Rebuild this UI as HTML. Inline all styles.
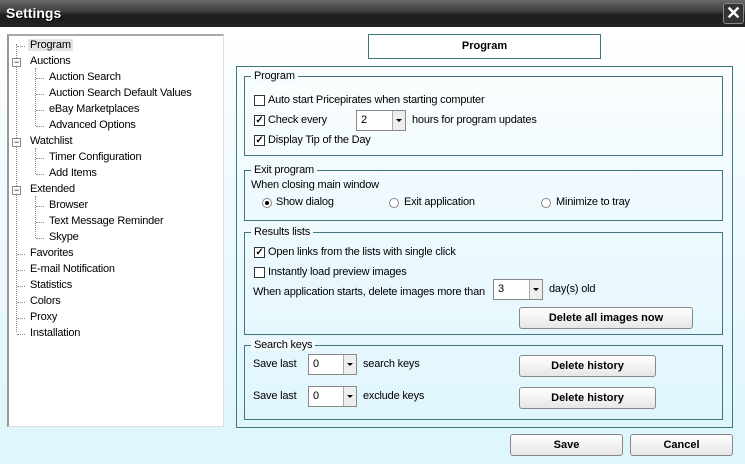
<!DOCTYPE html><html><head><style>
body{margin:0;width:745px;height:464px;overflow:hidden;font-family:"Liberation Sans",sans-serif;font-size:11px;letter-spacing:-0.2px;color:#000;background:linear-gradient(#fff 30px,#f3fbfe 150px,#e0f6fd 420px);position:relative}
.a{position:absolute}
.title{left:0;top:0;width:745px;height:27px;background:linear-gradient(#6a6a6a,#3a3a3a 45%,#1e1e1e 55%,#222);}
.title span{position:absolute;left:6px;top:5px;color:#fff;font-weight:bold;font-size:14px;letter-spacing:0;text-shadow:1px 1px 0 #000}
.x{left:723px;top:3px;width:19px;height:19px;border:1px solid #888;border-radius:3px;background:#333;color:#fff;font-size:18px;line-height:18px;text-align:center;font-weight:bold}
.tree{left:7px;top:34px;width:214px;height:390px;background:#fff;border:1px solid #ddd;border-left:2px solid #999;border-top:2px solid #aaa}
.tree .in{position:absolute;left:0;top:2px;width:100%}
.t{position:absolute;white-space:nowrap}
.dl{position:absolute;border-left:1px dotted #888}
.dh{position:absolute;border-top:1px dotted #888;width:8px}
.pm{position:absolute;width:7px;height:7px;border:1px solid #888;background:#fff;font-size:9px;line-height:6px;text-align:center}
.box{border:1px solid #3f7680}
.grp{position:absolute;left:244px;width:477px;border:1px solid #3f7680}
.lg{position:absolute;top:-7px;left:6px;background:#f3fbfe;padding:0 3px}
.cb{position:absolute;width:9px;height:9px;border:1px solid #333;background:#fff;font-size:10px;line-height:9px;text-align:center;font-weight:bold}
.rb{position:absolute;width:8px;height:8px;border:1px solid #888;border-radius:50%;background:#fff}
.dd{position:absolute;height:19px;border:1px solid #888;background:#fff}
.dd i{position:absolute;right:0;top:0;width:12px;height:19px;border-left:1px solid #aaa;background:#eee}
.dd i:after{content:"";position:absolute;left:3px;top:8px;border:3px solid transparent;border-top:3px solid #000}
.dd b{position:absolute;left:4px;top:3px;font-weight:normal}
.btn{position:absolute;height:20px;border:1px solid #888;border-radius:3px;background:linear-gradient(#fff,#e6e6e6);text-align:center;font-weight:bold;font-size:11px;line-height:20px;letter-spacing:0}
</style></head><body>
<div class="a title"><span>Settings</span></div>
<div class="a x">✕</div>
<div class="a tree"><div class="in">
<div class="dl" style="left:7px;top:6px;height:288px"></div>
<div class="dl" style="left:26px;top:30px;height:58px"></div>
<div class="dl" style="left:26px;top:110px;height:26px"></div>
<div class="dl" style="left:26px;top:158px;height:42px"></div>
<div class="dh" style="left:8px;top:8px"></div><div class="t" style="left:19px;top:1px;background:#e4e4e4;padding:0 2px">Program</div>
<div class="pm" style="left:3px;top:20px">−</div><div class="t" style="left:21px;top:17px">Auctions</div>
<div class="dh" style="left:27px;top:40px"></div><div class="t" style="left:40px;top:33px">Auction Search</div>
<div class="dh" style="left:27px;top:56px"></div><div class="t" style="left:40px;top:49px">Auction Search Default Values</div>
<div class="dh" style="left:27px;top:72px"></div><div class="t" style="left:40px;top:65px">eBay Marketplaces</div>
<div class="dh" style="left:27px;top:88px"></div><div class="t" style="left:40px;top:81px">Advanced Options</div>
<div class="pm" style="left:3px;top:100px">−</div><div class="t" style="left:21px;top:97px">Watchlist</div>
<div class="dh" style="left:27px;top:120px"></div><div class="t" style="left:40px;top:113px">Timer Configuration</div>
<div class="dh" style="left:27px;top:136px"></div><div class="t" style="left:40px;top:129px">Add Items</div>
<div class="pm" style="left:3px;top:148px">−</div><div class="t" style="left:21px;top:145px">Extended</div>
<div class="dh" style="left:27px;top:168px"></div><div class="t" style="left:40px;top:161px">Browser</div>
<div class="dh" style="left:27px;top:184px"></div><div class="t" style="left:40px;top:177px">Text Message Reminder</div>
<div class="dh" style="left:27px;top:200px"></div><div class="t" style="left:40px;top:193px">Skype</div>
<div class="dh" style="left:8px;top:216px"></div><div class="t" style="left:21px;top:209px">Favorites</div>
<div class="dh" style="left:8px;top:232px"></div><div class="t" style="left:21px;top:225px">E-mail Notification</div>
<div class="dh" style="left:8px;top:248px"></div><div class="t" style="left:21px;top:241px">Statistics</div>
<div class="dh" style="left:8px;top:264px"></div><div class="t" style="left:21px;top:257px">Colors</div>
<div class="dh" style="left:8px;top:280px"></div><div class="t" style="left:21px;top:273px">Proxy</div>
<div class="dh" style="left:8px;top:296px"></div><div class="t" style="left:21px;top:289px">Installation</div>
</div></div>
<div class="a box" style="left:368px;top:34px;width:231px;height:23px;background:#fff;text-align:center;line-height:23px;font-weight:bold;letter-spacing:0">Program</div>
<div class="a box" style="left:236px;top:66px;width:495px;height:360px"></div>

<div class="grp" style="top:76px;height:78px"><span class="lg">Program</span></div>
<div class="cb" style="left:254px;top:95px"></div><div class="a" style="left:268px;top:94px">Auto start Pricepirates when starting computer</div>
<div class="cb" style="left:254px;top:115px">✓</div><div class="a" style="left:268px;top:114px">Check every</div>
<div class="dd" style="left:356px;top:110px;width:48px"><b>2</b><i></i></div><div class="a" style="left:412px;top:114px">hours for program updates</div>
<div class="cb" style="left:254px;top:135px">✓</div><div class="a" style="left:268px;top:134px">Display Tip of the Day</div>

<div class="grp" style="top:170px;height:49px"><span class="lg">Exit program</span></div>
<div class="a" style="left:251px;top:179px">When closing main window</div>
<div class="rb" style="left:262px;top:198px"><div style="position:absolute;left:2px;top:2px;width:4px;height:4px;border-radius:50%;background:#000"></div></div><div class="a" style="left:276px;top:196px">Show dialog</div>
<div class="rb" style="left:389px;top:198px"></div><div class="a" style="left:404px;top:196px">Exit application</div>
<div class="rb" style="left:541px;top:198px"></div><div class="a" style="left:556px;top:196px">Minimize to tray</div>

<div class="grp" style="top:232px;height:101px"><span class="lg">Results lists</span></div>
<div class="cb" style="left:254px;top:247px">✓</div><div class="a" style="left:268px;top:246px">Open links from the lists with single click</div>
<div class="cb" style="left:254px;top:267px"></div><div class="a" style="left:268px;top:266px">Instantly load preview images</div>
<div class="a" style="left:253px;top:286px">When application starts, delete images more than</div>
<div class="dd" style="left:493px;top:279px;width:48px"><b>3</b><i></i></div><div class="a" style="left:549px;top:283px">day(s) old</div>
<div class="btn" style="left:519px;top:307px;width:172px">Delete all images now</div>

<div class="grp" style="top:345px;height:73px"><span class="lg">Search keys</span></div>
<div class="a" style="left:253px;top:358px">Save last</div>
<div class="dd" style="left:308px;top:354px;width:47px"><b>0</b><i></i></div><div class="a" style="left:363px;top:358px">search keys</div>
<div class="btn" style="left:519px;top:355px;width:135px">Delete history</div>
<div class="a" style="left:253px;top:390px">Save last</div>
<div class="dd" style="left:308px;top:386px;width:47px"><b>0</b><i></i></div><div class="a" style="left:363px;top:390px">exclude keys</div>
<div class="btn" style="left:519px;top:387px;width:135px">Delete history</div>

<div class="btn" style="left:510px;top:434px;width:111px">Save</div>
<div class="btn" style="left:630px;top:434px;width:101px">Cancel</div>
</body></html>
